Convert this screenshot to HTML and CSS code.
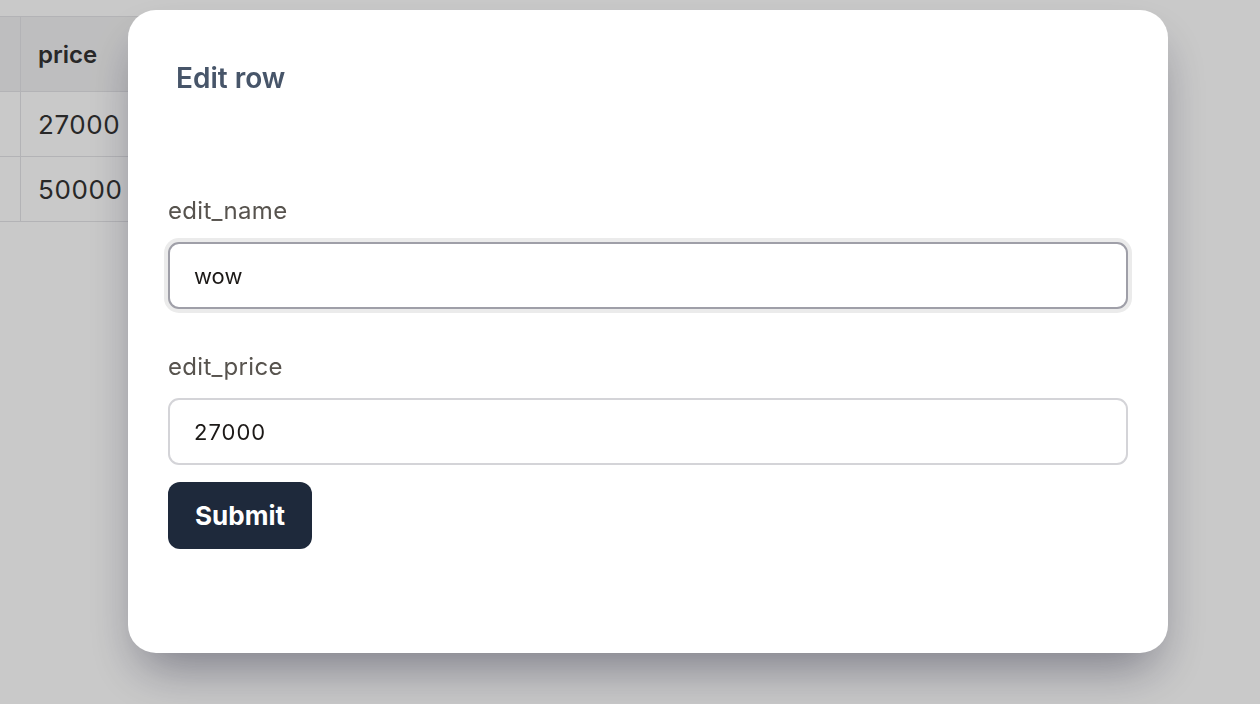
FILE: index.html
```html
<!DOCTYPE html>
<html lang="en">
<head>
<meta charset="utf-8">
<title>Edit row</title>
<link rel="stylesheet" href="styles.css">
</head>
<body>
  <div class="page">
    <table class="data-table">
      <thead>
        <tr><th class="col-name"></th><th class="col-price">price</th><th class="col-rest"></th></tr>
      </thead>
      <tbody>
        <tr><td class="col-name"></td><td class="col-price">27000</td><td class="col-rest"></td></tr>
        <tr><td class="col-name"></td><td class="col-price">50000</td><td class="col-rest"></td></tr>
      </tbody>
    </table>
  </div>

  <div class="overlay">
    <div class="modal">
      <h2 class="modal-title">Edit row</h2>
      <form class="form">
        <div class="field">
          <label class="label" for="edit_name">edit_name</label>
          <input class="input input-focus" id="edit_name" type="text" value="wow">
        </div>
        <div class="field">
          <label class="label" for="edit_price">edit_price</label>
          <input class="input" id="edit_price" type="text" value="27000">
        </div>
        <button class="submit" type="button">Submit</button>
      </form>
    </div>
  </div>
</body>
</html>
```

FILE: styles.css
```css
* { box-sizing: border-box; }

html, body {
  margin: 0;
  padding: 0;
  height: 100%;
  background: #ffffff;
  font-family: Inter, "Noto Sans", sans-serif;
  overflow: hidden;
}

.page {
  padding-top: 16px;
  margin-left: -114px;
}

.data-table {
  border-collapse: collapse;
  font-family: Inter, sans-serif;
  color: #333;
}

.data-table th,
.data-table td {
  border: 1px solid #e4e4e7;
  text-align: left;
  padding: 0 17px;
}

.data-table th {
  background: #f2f2f3;
  height: 75px;
  font-size: 24px;
  font-weight: 600;
}

.data-table td {
  height: 65px;
  font-size: 26px;
  letter-spacing: 0.6px;
  font-weight: 400;
}

.col-name { width: 134px; }
.col-price { width: 200px; }
.col-rest { width: 700px; }

.overlay {
  position: fixed;
  inset: 0;
  background: rgba(0, 0, 0, 0.21);
  padding: 10px 0 0 128px;
}

.modal {
  width: 1040px;
  height: 643px;
  background: #ffffff;
  border-radius: 28px;
  padding: 50px 40px 0 40px;
  box-shadow: 0 25px 50px -12px rgba(15, 15, 40, 0.42);
}

.modal-title {
  margin: 0;
  padding-left: 8px;
  font-size: 28px;
  line-height: 36px;
  font-weight: 600;
  color: #475569;
}

.form {
  margin-top: 101px;
  display: flex;
  flex-direction: column;
}

.field {
  display: flex;
  flex-direction: column;
  margin-bottom: 17px;
}

.field + .field {
  margin-top: 27px;
}

.label {
  font-size: 24px;
  line-height: 28px;
  letter-spacing: 0.3px;
  color: #57534e;
  margin-bottom: 17px;
}

.input {
  width: 960px;
  height: 67px;
  border: 2px solid #d4d4d8;
  border-radius: 11px;
  padding: 0 24px;
  font-family: Inter, sans-serif;
  font-size: 22px;
  color: #1c1917;
  background: #ffffff;
  outline: none;
}

#edit_price {
  letter-spacing: 1px;
}

.input-focus {
  border-color: #9f9fa8;
  box-shadow: 0 0 0 4px #ebebeb;
}

.submit {
  align-self: flex-start;
  width: 144px;
  height: 67px;
  border: none;
  border-radius: 12px;
  background: #1e293b;
  color: #ffffff;
  font-family: Inter, sans-serif;
  font-size: 26px;
  font-weight: 700;
  padding: 0;
}
```
